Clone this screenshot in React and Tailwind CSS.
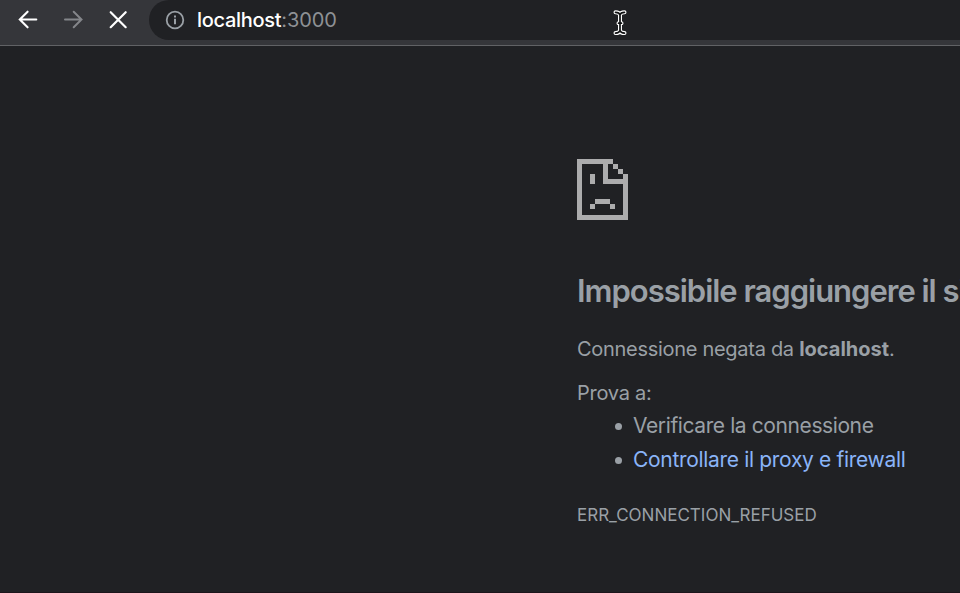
function BackArrow() {
  return (
    <svg width="20" height="20" viewBox="0 0 20 20" fill="none" stroke="currentColor" strokeWidth="2.1" strokeLinecap="round">
      <path d="M18.3 9.5H1.8M9.6 1.7 1.8 9.5l7.8 7.8" />
    </svg>
  );
}

function ForwardArrow() {
  return (
    <svg width="20" height="20" viewBox="0 0 20 20" fill="none" stroke="currentColor" strokeWidth="2" strokeLinecap="round">
      <path d="M2 9.5h16.5M10.7 1.7l7.8 7.8-7.8 7.8" />
    </svg>
  );
}

function StopIcon() {
  return (
    <svg width="20" height="20" viewBox="0 0 20 20" fill="none" stroke="currentColor" strokeWidth="2.2" strokeLinecap="round">
      <path d="m2.7 2.2 15 15M17.7 2.2l-15 15" />
    </svg>
  );
}

function InfoIcon() {
  return (
    <svg width="20" height="20" viewBox="0 0 20 20" fill="none">
      <circle cx="10" cy="10" r="8.3" stroke="currentColor" strokeWidth="1.8" />
      <path d="M9 8.8h2v5.4H9zM9 5.5h2v2H9z" fill="currentColor" />
    </svg>
  );
}

function SadPage() {
  return (
    <svg width="51" height="62" viewBox="0 0 51 62" shapeRendering="crispEdges" fill="currentColor" className="block">
      <path d="M0 0h36v5H5v51h41V25H26V5h5v15h15v-5h5v46H0z" />
      <path d="M36 5h5v5h-5zM41 10h5v5h-5zM13 15h5v10h-5zM18 40h15v5H18zM13 45h5v5h-5zM33 45h5v5h-5z" />
    </svg>
  );
}

function TextCursor() {
  return (
    <svg width="14" height="26" viewBox="0 0 14 26" fill="none" strokeLinecap="round" strokeLinejoin="round" className="pointer-events-none absolute left-[613px] top-[10px]">
      <path d="M2.5 2.3c2.3 0 4 .8 4.5 2.5.5-1.7 2.2-2.5 4.5-2.5M7 4.8v15.8M2.5 23.1c2.3 0 4-.8 4.5-2.5.5 1.7 2.2 2.5 4.5 2.5M5.5 13.2h3" stroke="#ffffff" strokeWidth="4" />
      <path d="M2.5 2.3c2.3 0 4 .8 4.5 2.5.5-1.7 2.2-2.5 4.5-2.5M7 4.8v15.8M2.5 23.1c2.3 0 4-.8 4.5-2.5.5 1.7 2.2 2.5 4.5 2.5M5.5 13.2h3" stroke="#101112" strokeWidth="1.7" />
    </svg>
  );
}

export default function App() {
  return (
    <div className="relative flex h-screen w-full flex-col overflow-hidden border-b border-[#1d151b] bg-[#202124] font-['Inter','Liberation_Sans',sans-serif] text-[#9aa0a6]">
      <header className="flex h-[46px] shrink-0 items-start border-b border-[#616265] bg-[#35363a]">
        <nav className="flex w-[149px] shrink-0 items-center gap-[25px] pl-[18px] pt-[10px]">
          <button className="text-white" aria-label="Indietro"><BackArrow /></button>
          <button className="text-[#84868a]" aria-label="Avanti"><ForwardArrow /></button>
          <button className="text-white" aria-label="Interrompi"><StopIcon /></button>
        </nav>
        <div className="flex h-10 flex-1 items-center rounded-l-full bg-[#202124] pl-4">
          <InfoIcon />
          <p className="ml-3 whitespace-nowrap text-xl">
            <span className="font-medium tracking-[-0.3px] text-white">localhost</span>
            <span className="tracking-[-0.1px] text-[#8e9195]">:3000</span>
          </p>
        </div>
      </header>
      <main className="ml-[577px] mt-[113px] flex flex-col whitespace-nowrap text-xl leading-[30px]">
        <div className="text-[#acacad]"><SadPage /></div>
        <h1 className="mt-[50px] text-[31px] font-semibold leading-10 tracking-[-1.01px]">Impossibile raggiungere il sito</h1>
        <p className="mt-[23px] tracking-[-0.29px]">Connessione negata da <strong className="font-bold tracking-[0px]">localhost</strong>.</p>
        <p className="mt-[14px] tracking-[-0.25px]">Prova a:</p>
        <ul className="mt-[3px] flex flex-col gap-1 text-[21px]">
          <li className="flex items-center">
            <i className="ml-[38px] mr-[11px] mt-px size-[7px] rounded-full bg-[#9aa0a6]" />
            <span className="tracking-[-0.4px]">Verificare la connessione</span>
          </li>
          <li className="flex items-center">
            <i className="ml-[38px] mr-[11px] mt-px size-[7px] rounded-full bg-[#9aa0a6]" />
            <a className="tracking-[-0.32px] text-[#8ab4f8]">Controllare il proxy e firewall</a>
          </li>
        </ul>
        <p className="mt-[25px] text-[17px]">ERR_CONNECTION_REFUSED</p>
      </main>
      <TextCursor />
    </div>
  );
}
